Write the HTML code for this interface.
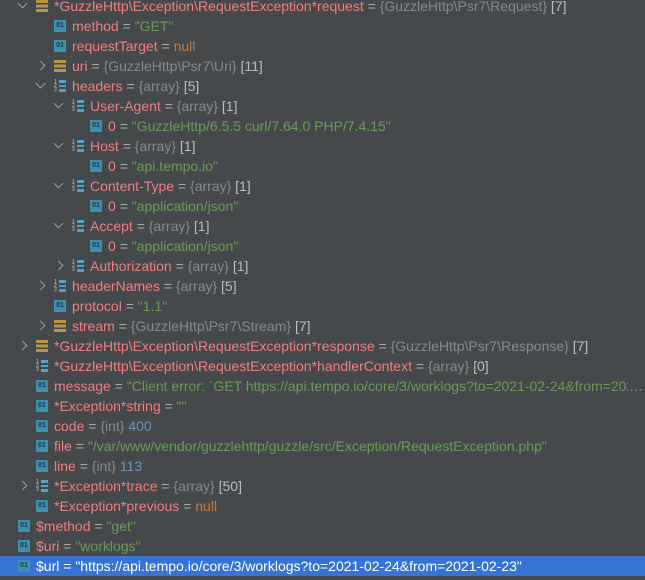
<!DOCTYPE html><html><head><style>
body{margin:0;width:645px;height:580px;background:#46494c;overflow:hidden;font-family:"Liberation Sans",sans-serif;font-size:14px;position:relative}
.r{position:absolute;left:0;width:645px;height:20px;line-height:20px;white-space:nowrap}
.sel{background:#3574d4}
.sel .n,.sel .s,.sel .e{color:#fff}
.a{position:absolute;top:6px;width:6px;height:6px;border-right:1.5px solid #9a9da0;border-bottom:1.5px solid #9a9da0}
.ac{transform:rotate(45deg);top:4px}
.ar{transform:rotate(-45deg)}
.i{position:absolute;top:4px;width:12px;height:12px}
.p{background:#3d8fb0;color:#1d3440;font-size:7px;line-height:12px;text-align:center;font-weight:bold}
.o:before,.o:after{content:"";position:absolute;left:0;width:12px;height:3px;background:#b89540}
.o:before{top:0;box-shadow:0 4.5px 0 #b89540}
.o:after{top:9px}
.l b{position:absolute;left:5px;width:7px;height:2.5px;background:#4fa3cf}
.l i{position:absolute;left:0;font-size:5px;line-height:4px;color:#c8c8c8;font-style:normal}
.t{position:absolute;overflow:hidden}
.n{color:#ef7f7f}.e{color:#a9a9a9}.g{color:#888}.s{color:#6a9a58}.k{color:#cc7832}.m{color:#6897bb}.w{color:#bbb}
</style></head><body>
<div id="c"></div>
<script>
var rows=[
[1,'c','o','*GuzzleHttp\\Exception\\RequestException*request','<span class="g">{GuzzleHttp\\Psr7\\Request}</span> <span class="w">[7]</span>'],
[2,'','p','method','<span class="s">"GET"</span>'],
[2,'','p','requestTarget','<span class="k">null</span>'],
[2,'r','o','uri','<span class="g">{GuzzleHttp\\Psr7\\Uri}</span> <span class="w">[11]</span>'],
[2,'c','l','headers','<span class="g">{array}</span> <span class="w">[5]</span>'],
[3,'c','l','User-Agent','<span class="g">{array}</span> <span class="w">[1]</span>'],
[4,'','p','0','<span class="s">"GuzzleHttp/6.5.5 curl/7.64.0 PHP/7.4.15"</span>'],
[3,'c','l','Host','<span class="g">{array}</span> <span class="w">[1]</span>'],
[4,'','p','0','<span class="s">"api.tempo.io"</span>'],
[3,'c','l','Content-Type','<span class="g">{array}</span> <span class="w">[1]</span>'],
[4,'','p','0','<span class="s">"application/json"</span>'],
[3,'c','l','Accept','<span class="g">{array}</span> <span class="w">[1]</span>'],
[4,'','p','0','<span class="s">"application/json"</span>'],
[3,'r','l','Authorization','<span class="g">{array}</span> <span class="w">[1]</span>'],
[2,'r','l','headerNames','<span class="g">{array}</span> <span class="w">[5]</span>'],
[2,'','p','protocol','<span class="s">"1.1"</span>'],
[2,'r','o','stream','<span class="g">{GuzzleHttp\\Psr7\\Stream}</span> <span class="w">[7]</span>'],
[1,'r','o','*GuzzleHttp\\Exception\\RequestException*response','<span class="g">{GuzzleHttp\\Psr7\\Response}</span> <span class="w">[7]</span>'],
[1,'','l','*GuzzleHttp\\Exception\\RequestException*handlerContext','<span class="g">{array}</span> <span class="w">[0]</span>'],
[1,'','p','message','<span class="s">"Client error: `GET https://api.tempo.io/core/3/worklogs?to=2021-02-24&amp;from=202</span>'],
[1,'','p','*Exception*string','<span class="s">""</span>'],
[1,'','p','code','<span class="g">{int}</span> <span class="m">400</span>'],
[1,'','p','file','<span class="s">"/var/www/vendor/guzzlehttp/guzzle/src/Exception/RequestException.php"</span>'],
[1,'','p','line','<span class="g">{int}</span> <span class="m">113</span>'],
[1,'r','l','*Exception*trace','<span class="g">{array}</span> <span class="w">[50]</span>'],
[1,'','p','*Exception*previous','<span class="k">null</span>'],
[0,'','p','$method','<span class="s">"get"</span>'],
[0,'','p','$uri','<span class="s">"worklogs"</span>'],
[0,'','p','$url','<span class="s">"https://api.tempo.io/core/3/worklogs?to=2021-02-24&amp;from=2021-02-23"</span>']
];
var h='';
rows.forEach(function(r,k){
var L=r[0],ix=18+18*L,y=-4+20*k;
h+='<div class="r'+(k==28?' sel':'')+'" style="top:'+y+'px">';
if(r[1])h+='<div class="a '+(r[1]=='c'?'ac':'ar')+'" style="left:'+(ix-17)+'px"></div>';
if(r[2]=='p')h+='<div class="i p" style="left:'+ix+'px">01</div>';
else if(r[2]=='o')h+='<div class="i o" style="left:'+ix+'px"></div>';
else h+='<div class="i l" style="left:'+ix+'px"><i style="top:0">1</i><i style="top:4px">2</i><i style="top:8px">3</i><b style="top:0"></b><b style="top:4.5px"></b><b style="top:9px"></b></div>';
var w=(k==19)?' width:'+(628-ix-18)+'px':'';
h+='<div class="t" style="left:'+(ix+18)+'px;'+w+'"><span class="n">'+r[3]+'</span> <span class="e">=</span> '+r[4]+'</div>';
if(k==19)h+='<div class="t m" style="left:629px">…</div>';
h+='</div>';
});
document.getElementById('c').innerHTML=h;
</script>
</body></html>
